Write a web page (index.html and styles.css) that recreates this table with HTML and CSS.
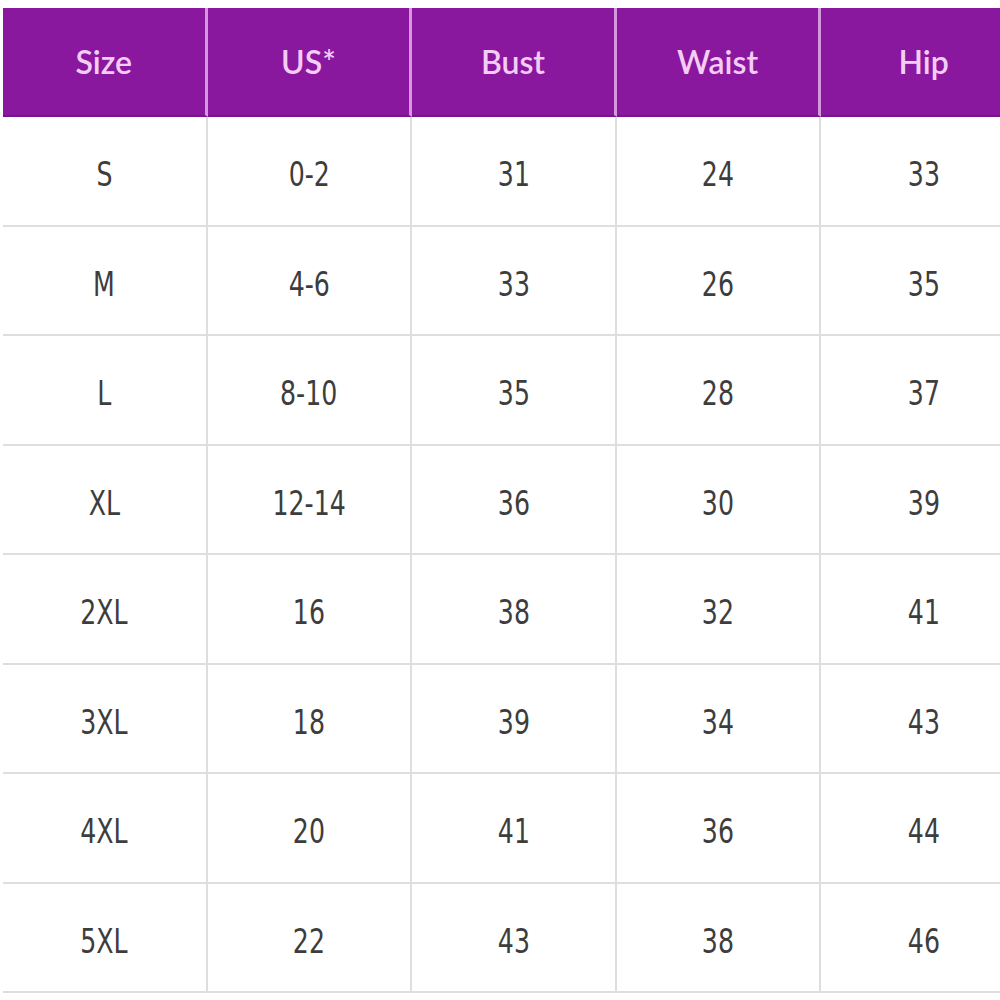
FILE: index.html
```html
<!DOCTYPE html>
<html>
<head>
<meta charset="utf-8">
<link rel="stylesheet" href="styles.css">
</head>
<body>
<div class="chart">
  <div class="cell head">Size</div><div class="cell head">US*</div><div class="cell head">Bust</div><div class="cell head">Waist</div><div class="cell head">Hip</div>
  <div class="cell"><span>S</span></div><div class="cell"><span>0-2</span></div><div class="cell"><span>31</span></div><div class="cell"><span>24</span></div><div class="cell"><span>33</span></div>
  <div class="cell"><span>M</span></div><div class="cell"><span>4-6</span></div><div class="cell"><span>33</span></div><div class="cell"><span>26</span></div><div class="cell"><span>35</span></div>
  <div class="cell"><span>L</span></div><div class="cell"><span>8-10</span></div><div class="cell"><span>35</span></div><div class="cell"><span>28</span></div><div class="cell"><span>37</span></div>
  <div class="cell"><span>XL</span></div><div class="cell"><span>12-14</span></div><div class="cell"><span>36</span></div><div class="cell"><span>30</span></div><div class="cell"><span>39</span></div>
  <div class="cell"><span>2XL</span></div><div class="cell"><span>16</span></div><div class="cell"><span>38</span></div><div class="cell"><span>32</span></div><div class="cell"><span>41</span></div>
  <div class="cell"><span>3XL</span></div><div class="cell"><span>18</span></div><div class="cell"><span>39</span></div><div class="cell"><span>34</span></div><div class="cell"><span>43</span></div>
  <div class="cell"><span>4XL</span></div><div class="cell"><span>20</span></div><div class="cell"><span>41</span></div><div class="cell"><span>36</span></div><div class="cell"><span>44</span></div>
  <div class="cell"><span>5XL</span></div><div class="cell"><span>22</span></div><div class="cell"><span>43</span></div><div class="cell"><span>38</span></div><div class="cell"><span>46</span></div>
</div>
</body>
</html>
```
FILE: styles.css
```css
html, body {
  margin: 0;
  padding: 0;
  background: #ffffff;
  overflow: hidden;
}
body {
  width: 1000px;
  height: 1000px;
  padding: 8px 0 0 3px;
  box-sizing: border-box;
}
.chart {
  display: grid;
  grid-template-columns: repeat(5, 204.6px);
  grid-template-rows: 109px repeat(8, 109.5px);
  width: 1023px;
}
.cell {
  display: flex;
  align-items: center;
  justify-content: center;
  padding-top: 8px;
  border-right: 2px solid #dedede;
  border-bottom: 2px solid #dedede;
  font-family: "DejaVu Sans", sans-serif;
  font-stretch: condensed;
  font-size: 33px;
  color: #3d3d3d;
  box-sizing: border-box;
}
.cell span {
  display: inline-block;
  transform: scaleX(0.85);
}
.cell:nth-child(5n) {
  border-right: none;
}
.head {
  background: #8a189e;
  color: #f4cdf6;
  font-family: Lato, sans-serif;
  font-stretch: normal;
  font-weight: 600;
  font-size: 32px;
  border-right: 3px solid #d598df;
  border-bottom: 2px solid #7a1290;
  padding-top: 0;
}
```
